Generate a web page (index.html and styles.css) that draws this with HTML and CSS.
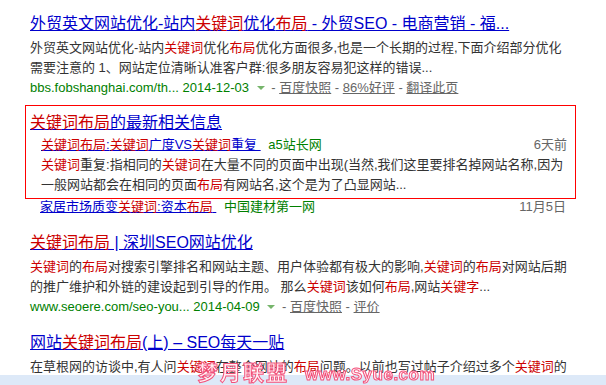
FILE: index.html
```html
<!DOCTYPE html>
<html>
<head>
    <meta charset="UTF-8">
    <title>关键词布局_百度搜索</title>
    <link rel="stylesheet" href="styles.css">
</head>
<body>
<div class="results">
    <!-- Result 1 -->
    <div class="result">
        <h3 class="t"><a href="#">外贸英文网站优化-站内<em>关键词</em>优化<em>布局</em> - 外贸SEO - 电商营销 - 福...</a></h3>
        <div class="abstract">外贸英文网站优化-站内<em>关键词</em>优化<em>布局</em>优化方面很多,也是一个长期的过程,下面介绍部分优化<br>需要注意的 1、网站定位清晰认准客户群:很多朋友容易犯这样的错误...</div>
        <div class="f13">
            <span class="g">bbs.fobshanghai.com/th... 2014-12-03</span>
            <span class="arrow"></span>
            - <a class="m" href="#">百度快照</a> - <a class="m" href="#">86%好评</a> - <a class="m" href="#">翻译此页</a>
        </div>
    </div>

    <!-- Latest news block, highlighted -->
    <div class="news">
        <div class="news-box">
            <h3 class="t"><a href="#"><em>关键词布局</em>的最新相关信息</a></h3>
            <div class="news-item">
                <div><a href="#"><em>关键词布局</em>:<em>关键词</em>广度VS<em>关键词</em>重复&nbsp;</a> <span class="source">a5站长网</span></div>
                <span class="time">6天前</span>
            </div>
            <div class="news-abs"><em>关键词</em>重复:指相同的<em>关键词</em>在大量不同的页面中出现(当然,我们这里要排名掉网站名称,因为<br>一般网站都会在相同的页面<em>布局</em>有网站名,这个是为了凸显网站...</div>
        </div>
        <div class="news-item news-more">
            <div><a href="#">家居市场质变<em>关键词</em>:资本<em>布局</em>&nbsp;</a> <span class="source">中国建材第一网</span></div>
            <span class="time">11月5日</span>
        </div>
    </div>

    <!-- Result 3 -->
    <div class="result">
        <h3 class="t"><a href="#"><em>关键词布局</em> | 深圳SEO网站优化</a></h3>
        <div class="abstract"><em>关键词</em>的<em>布局</em>对搜索引擎排名和网站主题、用户体验都有极大的影响,<em>关键词</em>的<em>布局</em>对网站后期<br>的推广维护和外链的建设起到引导的作用。 那么<em>关键词</em>该如何<em>布局</em>,网站<em>关键字</em>...</div>
        <div class="f13">
            <span class="g">www.seoere.com/seo-you... 2014-04-09</span>
            <span class="arrow"></span>
            - <a class="m" href="#">百度快照</a> - <a class="m" href="#">评价</a>
        </div>
    </div>

    <!-- Result 4 -->
    <div class="result">
        <h3 class="t"><a href="#">网站<em>关键词布局</em>(上) – SEO每天一贴</a></h3>
        <div class="abstract">在草根网的访谈中,有人问<em>关键词</em>在整个网站的<em>布局</em>问题。以前也写过帖子介绍过多个<em>关键词</em>的</div>
    </div>
</div>

<!-- bottom bar with watermark -->
<div class="bottom-bar"></div>
<div class="watermark"><span class="wm-cn">梦月联盟</span><span class="wm-en">www.Syue.com</span></div>
</body>
</html>
```

FILE: styles.css
```css
/* Page */
body {
    margin: 0;
    padding: 0;
    background-color: #fff;
    font-family: Arial, "Liberation Sans", "Noto Sans CJK SC", sans-serif;
    font-size: 13px;
    color: #333;
    overflow: hidden;
}

em {
    font-style: normal;
    color: #c00;
}

a {
    color: #00c;
}

.results {
    padding: 12px 0 0 30px;
}

/* Result blocks */
.result {
    margin-bottom: 14px;
}

.t {
    margin: 0 0 2px 0;
    font-size: 16px;
    font-weight: normal;
    line-height: 24px;
    white-space: nowrap;
}

.abstract {
    line-height: 20px;
    white-space: nowrap;
}

.f13 {
    line-height: 20px;
    color: #666;
    white-space: nowrap;
}

.g {
    color: #008000;
}

.arrow {
    display: inline-block;
    width: 0;
    height: 0;
    margin: 0 3px 1px 4px;
    border-left: 4px solid transparent;
    border-right: 4px solid transparent;
    border-top: 4px solid #76b56b;
    vertical-align: middle;
}

a.m {
    color: #666;
}

/* Latest news block */
.news {
    margin-bottom: 16px;
}

.news-box {
    width: 545px;
    margin: -7px 0 0 -5px;
    padding: 5px 0 3px 4px;
    border: 1px solid #f00;
}

.news-box .t {
    margin: 0;
}

.news-item {
    display: flex;
    justify-content: space-between;
    width: 526px;
    margin-left: 10px;
    line-height: 20px;
    white-space: nowrap;
}

.news-box .news-item {
    margin-left: 11px;
}

.news-more {
    line-height: 16px;
}

.source {
    margin-left: 4px;
    color: #008000;
}

.time {
    color: #666;
}

.news-abs {
    margin-left: 11px;
    line-height: 20px;
    white-space: nowrap;
}

/* Bottom bar and watermark */
.bottom-bar {
    position: fixed;
    left: 0;
    right: 0;
    bottom: 0;
    height: 10px;
    background-color: #dde9f8;
}

.watermark {
    position: fixed;
    left: 197px;
    bottom: 1px;
    display: flex;
    align-items: flex-end;
    gap: 16px;
    color: #fff0f4;
    -webkit-text-stroke: 1px #f2507a;
    font-weight: bold;
    white-space: nowrap;
}

.wm-cn {
    font-size: 21px;
    letter-spacing: 2px;
    line-height: 22px;
}

.wm-en {
    font-size: 17px;
    line-height: 18px;
    letter-spacing: 0.5px;
}
```
